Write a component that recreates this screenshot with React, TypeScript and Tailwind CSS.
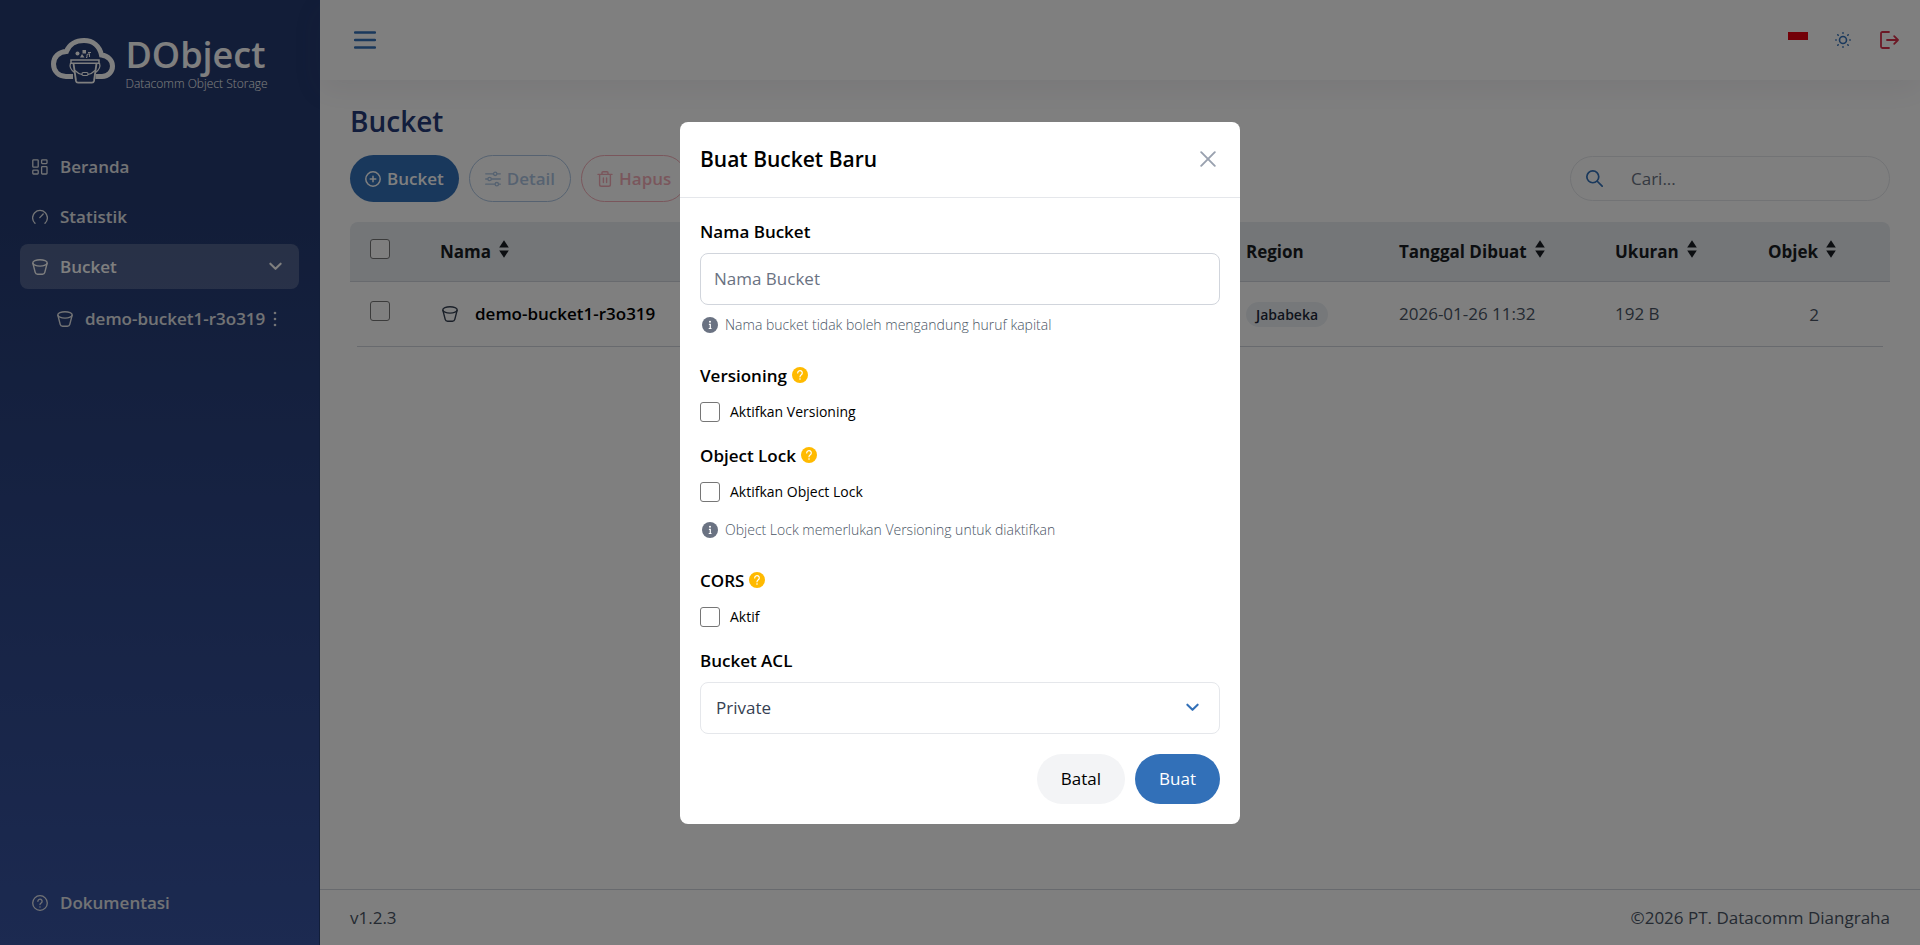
import type { ReactNode } from "react";

type IconProps = {
  className?: string;
};

type StrokeIconProps = IconProps & {
  width?: number;
  children: ReactNode;
};

const StrokeIcon = ({ className, width = 1.5, children }: StrokeIconProps) => (
  <svg
    viewBox="0 0 16 16"
    fill="none"
    stroke="currentColor"
    strokeWidth={width}
    strokeLinecap="round"
    strokeLinejoin="round"
    aria-hidden="true"
    className={`shrink-0 ${className ?? "size-4"}`}
  >
    {children}
  </svg>
);

const DashboardIcon = () => (
  <StrokeIcon width={1.3}>
    <rect x="0.8" y="0.8" width="5.4" height="7.4" rx="0.8" />
    <rect x="0.8" y="11.2" width="5.4" height="3.8" rx="0.8" />
    <rect x="9.6" y="0.8" width="5.4" height="3.8" rx="0.8" />
    <rect x="9.6" y="7.6" width="5.4" height="7.4" rx="0.8" />
  </StrokeIcon>
);

const GaugeIcon = () => (
  <StrokeIcon width={1.3}>
    <path d="M3 14.3a7.4 7.4 0 1 1 10 0" />
    <path d="M7.8 8.6 11.2 5" />
  </StrokeIcon>
);

const BucketIcon = ({ className }: IconProps) => (
  <StrokeIcon width={1.4} className={className}>
    <ellipse cx="8" cy="3.9" rx="7.2" ry="3.2" />
    <path d="M.9 4.400 3.200 13.400c.3 1.200 1.100 1.900 2.400 1.900h4.800c1.300 0 2.100-.7 2.400-1.900L15.100 4.400" />
  </StrokeIcon>
);

const HelpIcon = () => (
  <StrokeIcon width={1.3}>
    <circle cx="8" cy="8" r="7.3" />
    <path d="M5.9 6.3a2.1 2.1 0 1 1 3.3 1.7c-.7.5-1.2.8-1.2 1.6" />
    <path d="M8 11.8v.2" />
  </StrokeIcon>
);

const PlusCircleIcon = () => (
  <StrokeIcon>
    <circle cx="8" cy="8" r="7.2" />
    <path d="M8 5.2v5.6M5.2 8h5.6" />
  </StrokeIcon>
);

const SlidersIcon = () => (
  <StrokeIcon width={1.3}>
    <path d="M.7 2.8h7.8M12 2.8h3.3M.7 8h2.1M6.5 8h8.8M.7 13.2h9.3M13.6 13.2h1.7" />
    <circle cx="10.2" cy="2.8" r="1.7" />
    <circle cx="4.6" cy="8" r="1.7" />
    <circle cx="11.8" cy="13.2" r="1.7" />
  </StrokeIcon>
);

const TrashIcon = () => (
  <StrokeIcon width={1.4}>
    <path d="M1 3.4h14M5 3.2V1.8c0-.6.4-1 1-1h4c.6 0 1 .4 1 1v1.4" />
    <path d="M2.6 3.6v9.8c0 1 .8 1.8 1.8 1.8h7.2c1 0 1.8-.8 1.8-1.8V3.6" />
    <path d="M6.4 7v4.6M9.6 7v4.6" />
  </StrokeIcon>
);

const SearchIcon = () => (
  <StrokeIcon width={1.6} className="size-[17px]">
    <circle cx="6.4" cy="6.4" r="5.6" />
    <path d="m10.6 10.6 4.6 4.6" />
  </StrokeIcon>
);

const ChevronIcon = ({ className }: IconProps) => (
  <StrokeIcon width={2.2} className={className}>
    <path d="m2.5 5 5.5 5.5L13.500 5" />
  </StrokeIcon>
);

const SunIcon = () => (
  <StrokeIcon width={1.6}>
    <circle cx="8" cy="8" r="3.5" />
    <path d="M8 .8v.4M8 14.800v.4M.8 8h.4M14.800 8h.4M2.800 2.800l.4.4M12.800 12.800l.4.4M2.800 13.200l.4-.4M12.800 3.200l.4-.4" />
  </StrokeIcon>
);

const LogoutIcon = () => (
  <svg
    viewBox="0 0 19 18"
    fill="none"
    stroke="currentColor"
    strokeWidth="1.8"
    strokeLinecap="round"
    strokeLinejoin="round"
    className="h-[18px] w-[19px]"
    aria-hidden="true"
  >
    <path d="M9 1H2.500C1.500 1 1 1.500 1 2.500v13c0 1 .5 1.500 1.500 1.500H9" />
    <path d="M7 9h11M14.200 5.200 18 9l-3.800 3.800" />
  </svg>
);

const MenuIcon = () => (
  <svg viewBox="0 0 22 18" className="h-[18px] w-[22px]" aria-hidden="true">
    <path
      d="M1 1.500h20M1 9h20M1 16.500h20"
      stroke="currentColor"
      strokeWidth="2.4"
      strokeLinecap="round"
    />
  </svg>
);

const CloseIcon = () => (
  <StrokeIcon width={1.9}>
    <path d="m1.200 1.200 13.600 13.600M14.800 1.200 1.200 14.800" />
  </StrokeIcon>
);

const DotsIcon = () => (
  <svg viewBox="0 0 4 16" fill="currentColor" className="h-4 w-1" aria-hidden="true">
    <circle cx="2" cy="2" r="1.3" />
    <circle cx="2" cy="8" r="1.3" />
    <circle cx="2" cy="14" r="1.3" />
  </svg>
);

const InfoFilledIcon = () => (
  <svg viewBox="0 0 16 16" className="size-4 shrink-0 text-gray-500" aria-hidden="true">
    <circle cx="8" cy="8" r="8" fill="currentColor" />
    <circle cx="8" cy="4.800" r="1" fill="#fff" />
    <path d="M6.900 7.300H8.300v4M6.700 11.500h2.800" stroke="#fff" strokeWidth="1.200" fill="none" />
  </svg>
);

const QuestionFilledIcon = () => (
  <svg viewBox="0 0 16 16" className="size-4" aria-hidden="true">
    <circle cx="8" cy="8" r="8" fill="#ffba00" />
    <path
      d="M5.700 5.900a2.300 2.300 0 1 1 3.600 1.900C8.500 8.400 8 8.800 8 9.800"
      fill="none"
      stroke="#fff"
      strokeWidth="1.200"
      strokeLinecap="round"
    />
    <circle cx="8" cy="12" r=".8" fill="#fff" />
  </svg>
);

const SortIcon = () => (
  <svg viewBox="0 0 10 18" fill="currentColor" className="h-[18px] w-2.5" aria-hidden="true">
    <path d="M5 .3 9.800 7.500H.2z" />
    <path d="M5 17.700.2 10.500h9.600z" />
  </svg>
);

const Logo = () => (
  <svg viewBox="0 0 64 46" fill="none" stroke="currentColor" className="h-[46px] w-16" aria-hidden="true">
    <path
      d="M22 38.500H15C7.500 38.500 2.500 33 2.500 26S8 13.600 15.500 13.400C18 6.500 25 2.500 33 2.500c9 0 15.500 5.500 17.500 14.500C57 18 61.500 22.500 61.500 28S57.500 38.500 51 38.500h-6.500"
      strokeWidth="5"
    />
    <path d="M20 22h28v3.200H20z" strokeWidth="1.500" />
    <path d="M22.500 25.500 25 43c.2 1 .9 1.700 2 1.700h14c1.100 0 1.800-.7 2-1.700l2.500-17.500" strokeWidth="1.800" />
    <path d="M19.500 25c-1.300 4 .5 7 4 9.500M48.500 25c1.300 4-.5 7-4 9.500" strokeWidth="1.200" />
    <path d="M24 32.500c3 3 5 3.800 7 4M44 32.500c-3 3-5 3.800-7 4" strokeWidth="1.200" />
    <rect x="31" y="34.500" width="6" height="3" rx="1.200" strokeWidth="1.200" />
    <circle cx="26.500" cy="15.500" r="2" fill="currentColor" stroke="none" />
    <path d="M29 19.500 31 16l2.500 3.500zM31.500 12h3.500v3.500h-3.500z" fill="currentColor" stroke="none" />
    <path d="M36 19.500v-3l2.500-.8V19M35 19.500h1M40 14.500h-3" strokeWidth="1" />
  </svg>
);

type NavItemProps = {
  icon: ReactNode;
  label: string;
  active?: boolean;
};

const NavItem = ({ icon, label, active }: NavItemProps) => (
  <a
    href="#"
    className={
      active
        ? "flex h-[45px] items-center gap-3 rounded-lg bg-white/20 px-3 text-white"
        : "flex h-[45px] items-center gap-3 rounded-lg px-3 text-gray-200"
    }
  >
    {icon}
    <span className="flex-1 font-semibold">{label}</span>
    {active && <ChevronIcon className="mr-1 size-[15px]" />}
  </a>
);

const Sidebar = () => (
  <aside className="flex w-80 shrink-0 flex-col border-r border-[#243c72] bg-linear-to-b from-[#243a70] from-20% to-[#3854a2] px-5 text-white">
    <div className="mt-9 flex justify-center gap-2.5">
      <div className="pt-0.5">
        <Logo />
      </div>
      <div className="flex flex-col">
        <span className="text-[36px] leading-[38px] font-semibold">DObject</span>
        <span className="text-[12px] leading-5 font-light">Datacomm Object Storage</span>
      </div>
    </div>
    <nav className="mt-[50px] flex flex-1 flex-col gap-[5px] pb-5">
      <NavItem icon={<DashboardIcon />} label="Beranda" />
      <NavItem icon={<GaugeIcon />} label="Statistik" />
      <NavItem icon={<BucketIcon />} label="Bucket" active />
      <div className="flex h-[50px] items-center gap-2 pl-[37px] text-gray-200">
        <a href="#" className="flex items-center gap-3 font-semibold">
          <BucketIcon />
          demo-bucket1-r3o319
        </a>
        <button aria-label="Menu bucket">
          <DotsIcon />
        </button>
      </div>
      <div className="mt-auto">
        <NavItem icon={<HelpIcon />} label="Dokumentasi" />
      </div>
    </nav>
  </aside>
);

const Topbar = () => (
  <header className="flex h-20 items-center justify-between pr-[21px] pl-[34px] text-[#3270b8] shadow-[0_10px_30px_0_rgba(82,63,105,0.08)]">
    <button aria-label="Menu">
      <MenuIcon />
    </button>
    <div className="flex items-center">
      <button aria-label="Bahasa Indonesia" className="h-4 w-5 bg-linear-to-b from-[#e70011] from-50% to-white to-50%" />
      <button aria-label="Tema" className="ml-[27px]">
        <SunIcon />
      </button>
      <button aria-label="Keluar" className="ml-[29px] text-[#d9304a]">
        <LogoutIcon />
      </button>
    </div>
  </header>
);

const Toolbar = () => (
  <div className="mt-4 flex items-center justify-between">
    <div className="flex gap-2.5 font-semibold">
      <button className="flex h-[47px] items-center gap-1.5 rounded-full bg-[#3270b8] px-[15px] text-white">
        <PlusCircleIcon />
        Bucket
      </button>
      <button
        className="flex h-[47px] items-center gap-1.5 rounded-full border border-[#3270b8] px-[15px] text-[#3270b8] opacity-40"
        disabled
      >
        <SlidersIcon />
        Detail
      </button>
      <button
        className="flex h-[47px] items-center gap-1.5 rounded-full border border-[#e5354f] px-[15px] text-[#e5354f] opacity-40"
        disabled
      >
        <TrashIcon />
        Hapus
      </button>
    </div>
    <label className="flex h-[45px] w-80 items-center gap-7 rounded-full border border-gray-200 pl-[15px] text-[#3270b8]">
      <SearchIcon />
      <input
        type="search"
        aria-label="Cari"
        placeholder="Cari..."
        className="w-full flex-1 text-gray-700 outline-none placeholder:text-gray-500"
      />
    </label>
  </div>
);

type HeadCellProps = {
  label: string;
  className?: string;
  sortable?: boolean;
};

const HeadCell = ({ label, className, sortable = true }: HeadCellProps) => (
  <th className={`border-b border-gray-300 px-2.5 text-left font-bold ${className ?? ""}`}>
    <span className="flex items-center gap-2">
      {label}
      {sortable && (
        <button aria-label={`Urutkan ${label}`} className="pb-1.5">
          <SortIcon />
        </button>
      )}
    </span>
  </th>
);

const checkboxStyle =
  "block size-5 shrink-0 appearance-none rounded-[3px] border-[1.5px] border-[#767676] bg-white";

const cellStyle = "border-b border-gray-300 px-2.5";

const BucketTable = () => (
  <table className="mt-5 w-full table-fixed border-separate border-spacing-0">
    <thead>
      <tr className="h-[60px] bg-[#e8ecf1] text-[#181c22]">
        <th className="w-20 rounded-tl-lg border-b border-gray-300 pb-1.5 pl-5">
          <input type="checkbox" aria-label="Pilih semua" className={checkboxStyle} />
        </th>
        <HeadCell label="Nama" />
        <HeadCell label="Region" className="w-[153px]" sortable={false} />
        <HeadCell label="Tanggal Dibuat" className="w-[216px]" />
        <HeadCell label="Ukuran" className="w-[153px]" />
        <HeadCell label="Objek" className="w-[132px] rounded-tr-lg" />
      </tr>
    </thead>
    <tbody>
      <tr className="h-[65px] text-gray-600">
        <td className="relative pb-2 pl-5 after:absolute after:right-0 after:bottom-0 after:left-[7px] after:h-px after:bg-gray-300">
          <input type="checkbox" aria-label="Pilih demo-bucket1-r3o319" className={checkboxStyle} />
        </td>
        <td className={cellStyle}>
          <a href="#" className="flex items-center gap-[17px] pl-0.5 font-semibold text-black">
            <BucketIcon className="size-4 text-gray-700" />
            demo-bucket1-r3o319
          </a>
        </td>
        <td className={cellStyle}>
          <span className="inline-block rounded-full bg-[#edf1f5] px-2.5 text-sm leading-[25px] font-semibold text-gray-800">
            Jababeka
          </span>
        </td>
        <td className={cellStyle}>2026-01-26 11:32</td>
        <td className={cellStyle}>192 B</td>
        <td className="relative pr-[30px] pl-2.5 text-center after:absolute after:right-[7px] after:bottom-0 after:left-0 after:h-px after:bg-gray-300">
          2
        </td>
      </tr>
    </tbody>
  </table>
);

type FieldTitleProps = {
  children: ReactNode;
};

const FieldTitle = ({ children }: FieldTitleProps) => (
  <div className="flex h-6 items-center gap-[5px] font-semibold">
    {children}
    <span className="pb-0.5">
      <QuestionFilledIcon />
    </span>
  </div>
);

type CheckFieldProps = {
  id: string;
  label: string;
};

const CheckField = ({ id, label }: CheckFieldProps) => (
  <div className="mt-3.5 flex h-5 items-center gap-2.5">
    <input id={id} type="checkbox" className={checkboxStyle} />
    <label htmlFor={id} className="text-sm">
      {label}
    </label>
  </div>
);

const Hint = ({ children }: FieldTitleProps) => (
  <p className="flex h-5 items-center gap-[7px] pl-0.5 text-sm font-light text-gray-600">
    <InfoFilledIcon />
    {children}
  </p>
);

const CreateBucketModal = () => (
  <div className="fixed inset-0 flex items-center justify-center bg-black/50">
    <form
      role="dialog"
      aria-labelledby="modal-title"
      className="w-[560px] rounded-lg bg-white text-black"
    >
      <div className="flex h-[76px] items-center justify-between border-b border-gray-200 px-5">
        <h2 id="modal-title" className="text-[21px] font-semibold">
          Buat Bucket Baru
        </h2>
        <button type="button" aria-label="Tutup" className="mr-1 text-gray-400">
          <CloseIcon />
        </button>
      </div>
      <div className="px-5 py-5">
        <label htmlFor="bucket-name" className="block h-7 leading-7 font-semibold">
          Nama Bucket
        </label>
        <input
          id="bucket-name"
          placeholder="Nama Bucket"
          className="mt-[7px] h-[52px] w-full rounded-lg border border-gray-300 px-[13px] outline-none placeholder:text-gray-500"
        />
        <div className="mt-2.5">
          <Hint>Nama bucket tidak boleh mengandung huruf kapital</Hint>
        </div>

        <div className="mt-[29px]">
          <FieldTitle>Versioning</FieldTitle>
          <CheckField id="versioning" label="Aktifkan Versioning" />
        </div>

        <div className="mt-[22px]">
          <FieldTitle>Object Lock</FieldTitle>
          <CheckField id="object-lock" label="Aktifkan Object Lock" />
          <div className="mt-[18px]">
            <Hint>Object Lock memerlukan Versioning untuk diaktifkan</Hint>
          </div>
        </div>

        <div className="mt-[29px]">
          <FieldTitle>CORS</FieldTitle>
          <CheckField id="cors" label="Aktif" />
        </div>

        <label htmlFor="acl" className="mt-[20px] block h-7 leading-7 font-semibold">
          Bucket ACL
        </label>
        <div className="relative mt-[7px] text-[#3270b8]">
          <select
            id="acl"
            className="h-[52px] w-full appearance-none rounded-lg border border-gray-200 px-[15px] text-gray-700"
          >
            <option>Private</option>
          </select>
          <ChevronIcon className="pointer-events-none absolute top-[18px] right-5 size-[15px]" />
        </div>

        <div className="mt-5 flex justify-end gap-2.5">
          <button type="button" className="h-[50px] rounded-full bg-gray-100 px-6">
            Batal
          </button>
          <button type="submit" className="h-[50px] rounded-full bg-[#3270b8] px-6 text-white">
            Buat
          </button>
        </div>
      </div>
    </form>
  </div>
);

export default function App() {
  return (
    <div className="flex min-h-screen bg-white font-['Open_Sans',sans-serif] text-[17px] leading-6">
      <Sidebar />
      <div className="flex min-w-0 flex-1 flex-col">
        <Topbar />
        <main className="flex-1 px-[30px]">
          <h1 className="mt-[23px] text-[28px] leading-9 font-semibold text-[#243a78]">Bucket</h1>
          <Toolbar />
          <BucketTable />
        </main>
        <footer className="flex h-14 items-center justify-between border-t border-gray-300 px-[30px] text-gray-600">
          <span>v1.2.3</span>
          <span>©2026 PT. Datacomm Diangraha</span>
        </footer>
      </div>
      <CreateBucketModal />
    </div>
  );
}
